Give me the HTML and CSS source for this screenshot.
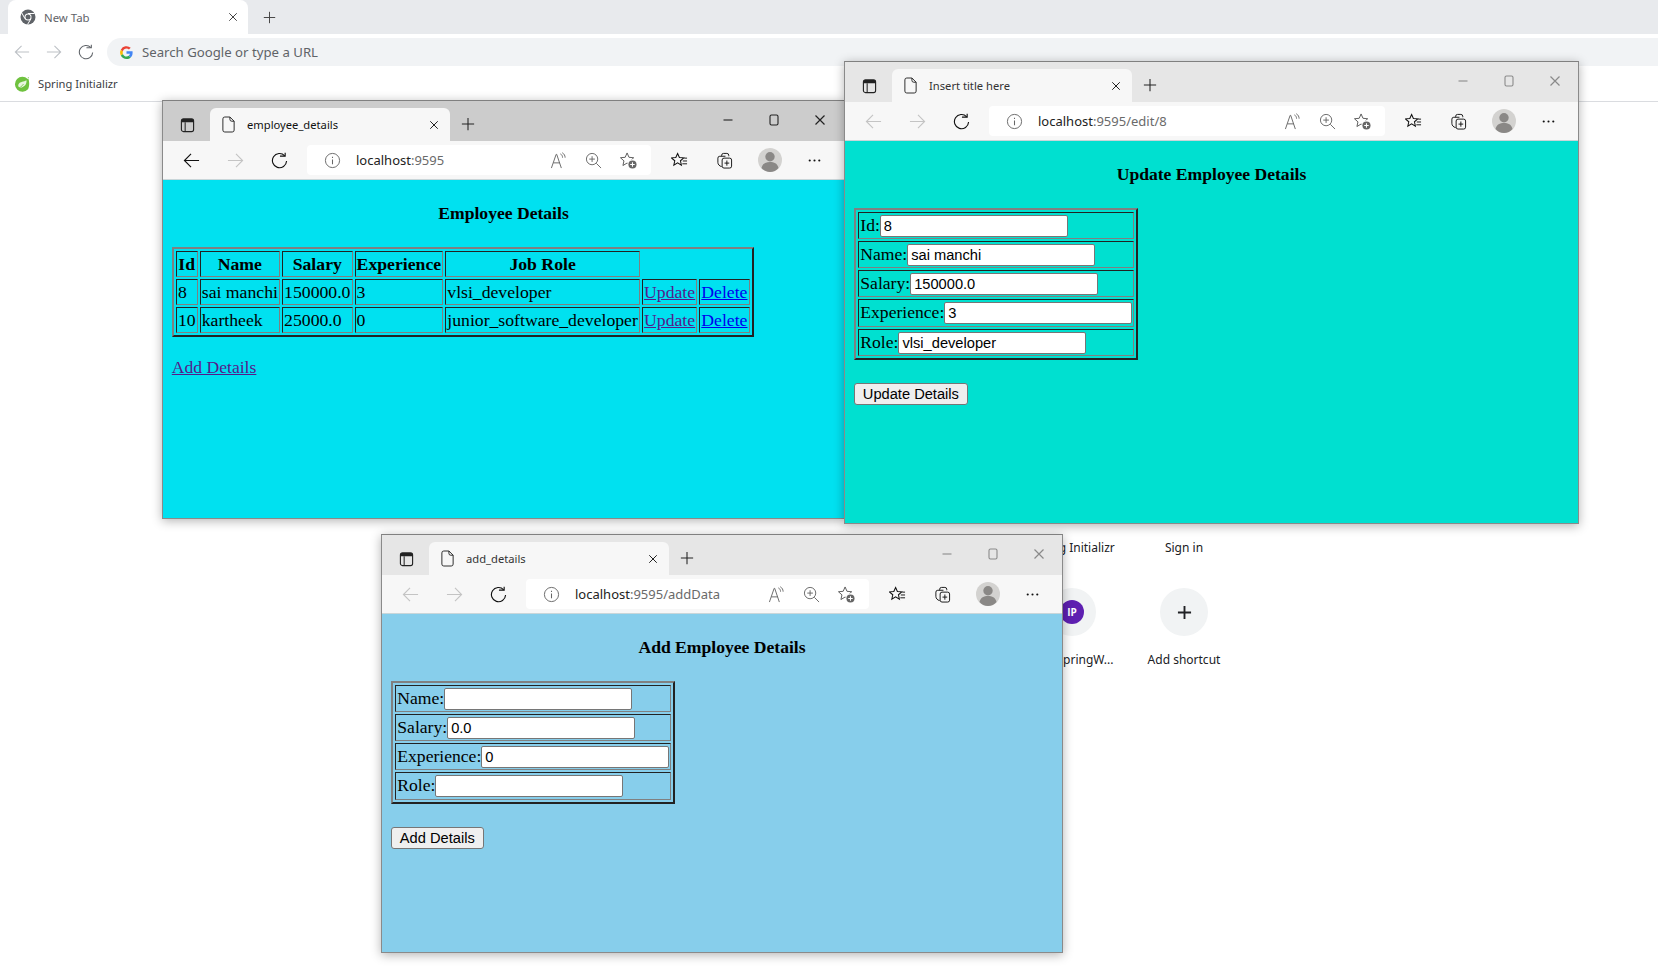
FILE: index.html
```html
<!DOCTYPE html>
<html lang="en">
<head>
<meta charset="utf-8">
<title>Employee windows</title>
<link rel="stylesheet" href="styles.css">
</head>
<body>
<svg class="defs" width="0" height="0" aria-hidden="true">
  <symbol id="i-vtabs" viewBox="0 0 16 16"><rect x="1.5" y="1.500" width="13" height="13.500" rx="2.200" fill="none" stroke="currentColor" stroke-width="1.2"/><path d="M1.5 3.500a2 2 0 0 1 2-2h9a2 2 0 0 1 2 2v1.500h-13z" fill="currentColor"/><path d="M5.500 5v10" stroke="currentColor" stroke-width="1.1"/></symbol>
  <symbol id="i-page" viewBox="0 0 16 18"><path d="M4 1h5.500L14 5.500V15a2 2 0 0 1-2 2H4a2 2 0 0 1-2-2V3a2 2 0 0 1 2-2z M9.500 1v2.500a2 2 0 0 0 2 2H14" fill="none" stroke="currentColor" stroke-width="1"/></symbol>
  <symbol id="i-x" viewBox="0 0 12 12"><path d="M1.5 1.5l9 9M10.5 1.5l-9 9" stroke="currentColor" stroke-width="1.2" fill="none"/></symbol>
  <symbol id="i-plus" viewBox="0 0 16 16"><path d="M8 1v14M1 8h14" stroke="currentColor" stroke-width="1.2" fill="none"/></symbol>
  <symbol id="i-plus-bold" viewBox="0 0 16 16"><path d="M8 1v14M1 8h14" stroke="currentColor" stroke-width="2" fill="none"/></symbol>
  <symbol id="i-min" viewBox="0 0 12 12"><path d="M1.500 6h9" stroke="currentColor" stroke-width="1.1"/></symbol>
  <symbol id="i-max" viewBox="0 0 12 12"><rect x="2" y="1" width="8" height="10" rx="1.5" fill="none" stroke="currentColor" stroke-width="1.1"/></symbol>
  <symbol id="i-back" viewBox="0 0 18 18"><path d="M17 9H1.5M8.5 2L1.5 9l7 7" fill="none" stroke="currentColor" stroke-width="1.2"/></symbol>
  <symbol id="i-fwd" viewBox="0 0 18 18"><path d="M1 9h15.5M9.5 2l7 7-7 7" fill="none" stroke="currentColor" stroke-width="1.2"/></symbol>
  <symbol id="i-reload" viewBox="0 0 18 18"><path d="M14.500 4A7.500 7.500 0 1 0 16.500 9.500" fill="none" stroke="currentColor" stroke-width="1.2"/><path d="M9.500 4.300h5.500V.8" fill="none" stroke="currentColor" stroke-width="1.2"/></symbol>
  <symbol id="i-info" viewBox="0 0 18 18"><circle cx="9" cy="9" r="7.5" fill="none" stroke="currentColor" stroke-width="1"/><path d="M9 8v5M9 5v1.3" stroke="currentColor" stroke-width="1.1"/></symbol>
  <symbol id="i-read" viewBox="0 0 18 18"><path d="M1.500 17L6.500 2.500h.6L12 17M3.500 11.500h7" fill="none" stroke="currentColor" stroke-width="1"/><path d="M11 2c1.500.8 2.300 2.200 2.300 4M13 .8c2 1.200 3 3 3 5.200" fill="none" stroke="currentColor" stroke-width="1"/></symbol>
  <symbol id="i-zoom" viewBox="0 0 18 18"><circle cx="7.5" cy="7.5" r="6" fill="none" stroke="currentColor" stroke-width="1"/><path d="M12 12l5 5M7.5 4.5v6M4.5 7.5h6" stroke="currentColor" stroke-width="1"/></symbol>
  <symbol id="i-favadd" viewBox="0 0 18 18"><path d="M7.500 1l2 4.600 5 .5-3.700 3.300 1.100 4.900-4.400-2.600-4.400 2.600 1.100-4.900L.5 6.100l5-.5z" fill="none" stroke="#555" stroke-width="1"/><circle cx="13.200" cy="13.200" r="5.400" fill="#fff"/><circle cx="13.200" cy="13.200" r="4.300" fill="#666"/><path d="M13.200 10.800v4.800M10.800 13.200h4.800" stroke="#fff" stroke-width="1.100"/></symbol>
  <symbol id="i-favs" viewBox="0 0 18 18"><path d="M7 1.500l1.900 4.300 4.600.4-3.500 3.100 1 4.600-4-2.400-4 2.400 1-4.600L.5 6.200l4.600-.4z" fill="none" stroke="currentColor" stroke-width="1.100"/><path d="M12.500 9.500h4.500M12 12.500h5M14 6.500h3" stroke="currentColor" stroke-width="1"/></symbol>
  <symbol id="i-coll" viewBox="0 0 18 18"><path d="M6 4.500V3.500a2 2 0 0 1 2-2h3.500a2 2 0 0 1 2 2v1" fill="none" stroke="currentColor" stroke-width="1"/><path d="M6 15.500C3.500 15 2 13 2 11V6.500a2 2 0 0 1 2-2h6" fill="none" stroke="currentColor" stroke-width="1"/><rect x="6.500" y="6.500" width="10" height="10.500" rx="2" fill="none" stroke="currentColor" stroke-width="1"/><path d="M11.500 9v5.500M9 11.750h5" stroke="currentColor" stroke-width="1"/></symbol>
  <symbol id="i-avatar" viewBox="0 0 24 24"><circle cx="12" cy="12" r="12" fill="#d3d2d0"/><circle cx="12" cy="8.700" r="4.700" fill="#8a8886"/><path d="M3.500 20c1-4.500 4.500-6 8.500-6s7.500 1.500 8.500 6c-2.200 2.500-5.200 4-8.500 4s-6.300-1.500-8.500-4z" fill="#8a8886"/></symbol>
  <symbol id="i-dots" viewBox="0 0 16 16"><circle cx="3.500" cy="8" r="1" fill="currentColor"/><circle cx="8" cy="8" r="1" fill="currentColor"/><circle cx="12.500" cy="8" r="1" fill="currentColor"/></symbol>
</svg>

<div class="chrome">
  <div class="tabstrip">
    <div class="ctab">
      <svg class="cfav" viewBox="0 0 16 16"><circle cx="8" cy="8" r="7.500" fill="#5f6368"/><circle cx="8" cy="8" r="3.500" fill="#fff"/><circle cx="8" cy="8" r="2.500" fill="#5f6368"/><path d="M8 4.500h6.500M5 9.700L1.800 4M11 9.700L7.500 15.500" stroke="#fff" stroke-width="1"/></svg>
      <span class="ctab-title">New Tab</span>
      <svg class="cx"><use href="#i-x"/></svg>
    </div>
    <svg class="cplus"><use href="#i-plus"/></svg>
  </div>
  <div class="ctoolbar">
    <svg class="cnav dim"><use href="#i-back"/></svg>
    <svg class="cnav dim"><use href="#i-fwd"/></svg>
    <svg class="cnav"><use href="#i-reload"/></svg>
    <div class="omnibox">
      <svg class="glogo" viewBox="0 0 16 16"><path d="M15.500 8.200c0-.6 0-1.100-.1-1.600H8v3h4.300c-.2 1-.8 1.800-1.600 2.400l2.500 2c1.500-1.400 2.300-3.400 2.300-5.800z" fill="#4285f4"/><path d="M8 16c2.100 0 3.900-.7 5.200-1.900l-2.500-2c-.7.500-1.600.8-2.700.8-2.100 0-3.800-1.400-4.400-3.200L1 11.700C2.300 14.300 5 16 8 16z" fill="#34a853"/><path d="M3.600 9.700a4.800 4.800 0 0 1 0-3.100L1 4.500a8 8 0 0 0 0 7.200z" fill="#fbbc05"/><path d="M8 3.200c1.200 0 2.200.4 3 1.200l2.200-2.200A8 8 0 0 0 1 4.500l2.600 2C4.200 4.600 5.900 3.200 8 3.200z" fill="#ea4335"/></svg>
      <span class="omni-text">Search Google or type a URL</span>
    </div>
  </div>
  <div class="bookmarks">
    <svg class="spring" viewBox="0 0 16 16"><path d="M14.800 1c-.2.800-.6 1.400-1.100 1.900A7.500 7.500 0 1 0 14 13.300c1.500-3 1.800-8-.3-12.300z" fill="#6fc23f"/><path d="M12.500 4.300c.3 3.800-1.800 6.900-6.200 7.500-1.600-.3-2.600-1.900-1.800-3.600C6.200 5.300 9.800 6.300 12.500 4.300z" fill="#e8f5df"/><path d="M3 12.500c2.500-.5 5-2 6.500-4.500" fill="none" stroke="#6fc23f" stroke-width=".8"/></svg>
    <span class="bm-text">Spring Initializr</span>
  </div>
  <div class="tiles">
    <div class="tile"><div class="tile-circle"></div><span class="tile-label">Spring Initializr</span></div>
    <div class="tile"><div class="tile-circle"></div><span class="tile-label">Sign in</span></div>
    <div class="tile"><div class="tile-circle"><span class="ip">IP</span></div><span class="tile-label">Java SpringW...</span></div>
    <div class="tile"><div class="tile-circle"><svg class="add"><use href="#i-plus-bold"/></svg></div><span class="tile-label">Add shortcut</span></div>
  </div>
</div>

<section class="win win-list active">
  <header class="titlebar">
    <svg class="tb-vtabs"><use href="#i-vtabs"/></svg>
    <div class="tab"><svg class="tab-page"><use href="#i-page"/></svg><span class="tab-title">employee_details</span><svg class="tab-x"><use href="#i-x"/></svg></div>
    <svg class="tb-plus"><use href="#i-plus"/></svg>
    <div class="controls"><svg class="ctl"><use href="#i-min"/></svg><svg class="ctl"><use href="#i-max"/></svg><svg class="ctl"><use href="#i-x"/></svg></div>
  </header>
  <nav class="toolbar">
    <span class="slot"><svg class="nav"><use href="#i-back"/></svg></span>
    <span class="slot dim"><svg class="nav"><use href="#i-fwd"/></svg></span>
    <span class="slot"><svg class="nav"><use href="#i-reload"/></svg></span>
    <div class="address">
      <svg class="a-info"><use href="#i-info"/></svg>
      <span class="url"><span class="host">localhost</span>:9595</span>
      <svg class="a-icon"><use href="#i-read"/></svg><svg class="a-icon"><use href="#i-zoom"/></svg><svg class="a-icon"><use href="#i-favadd"/></svg>
    </div>
    <span class="slot wide"><svg class="nav"><use href="#i-favs"/></svg></span>
    <span class="slot wide"><svg class="nav"><use href="#i-coll"/></svg></span>
    <span class="slot wide"><svg class="avatar"><use href="#i-avatar"/></svg></span>
    <span class="slot wide"><svg class="nav"><use href="#i-dots"/></svg></span>
  </nav>
  <main class="page page-list">
    <h4 class="heading">Employee Details</h4>
    <table class="data">
      <thead><tr><th>Id</th><th>Name</th><th>Salary</th><th>Experience</th><th>Job Role</th></tr></thead>
      <tbody>
        <tr><td>8</td><td>sai manchi</td><td>150000.0</td><td>3</td><td>vlsi_developer</td><td><a class="visited" href="#">Update</a></td><td><a class="fresh" href="#">Delete</a></td></tr>
        <tr><td>10</td><td>kartheek</td><td>25000.0</td><td>0</td><td>junior_software_developer</td><td><a class="visited" href="#">Update</a></td><td><a class="fresh" href="#">Delete</a></td></tr>
      </tbody>
    </table>
    <p class="after"><a class="visited" href="#">Add Details</a></p>
  </main>
</section>

<section class="win win-edit">
  <header class="titlebar">
    <svg class="tb-vtabs"><use href="#i-vtabs"/></svg>
    <div class="tab"><svg class="tab-page"><use href="#i-page"/></svg><span class="tab-title">Insert title here</span><svg class="tab-x"><use href="#i-x"/></svg></div>
    <svg class="tb-plus"><use href="#i-plus"/></svg>
    <div class="controls"><svg class="ctl"><use href="#i-min"/></svg><svg class="ctl"><use href="#i-max"/></svg><svg class="ctl"><use href="#i-x"/></svg></div>
  </header>
  <nav class="toolbar">
    <span class="slot dim"><svg class="nav"><use href="#i-back"/></svg></span>
    <span class="slot dim"><svg class="nav"><use href="#i-fwd"/></svg></span>
    <span class="slot"><svg class="nav"><use href="#i-reload"/></svg></span>
    <div class="address">
      <svg class="a-info"><use href="#i-info"/></svg>
      <span class="url"><span class="host">localhost</span>:9595/edit/8</span>
      <svg class="a-icon"><use href="#i-read"/></svg><svg class="a-icon"><use href="#i-zoom"/></svg><svg class="a-icon"><use href="#i-favadd"/></svg>
    </div>
    <span class="slot wide"><svg class="nav"><use href="#i-favs"/></svg></span>
    <span class="slot wide"><svg class="nav"><use href="#i-coll"/></svg></span>
    <span class="slot wide"><svg class="avatar"><use href="#i-avatar"/></svg></span>
    <span class="slot wide"><svg class="nav"><use href="#i-dots"/></svg></span>
  </nav>
  <main class="page page-edit">
    <h4 class="heading">Update Employee Details</h4>
    <table class="form">
      <tr><td><label class="field">Id:<input class="input" value="8"></label></td></tr>
      <tr><td><label class="field">Name:<input class="input" value="sai manchi"></label></td></tr>
      <tr><td><label class="field">Salary:<input class="input" value="150000.0"></label></td></tr>
      <tr><td><label class="field">Experience:<input class="input" value="3"></label></td></tr>
      <tr><td><label class="field">Role:<input class="input" value="vlsi_developer"></label></td></tr>
    </table>
    <button class="btn" type="button">Update Details</button>
  </main>
</section>

<section class="win win-add">
  <header class="titlebar">
    <svg class="tb-vtabs"><use href="#i-vtabs"/></svg>
    <div class="tab"><svg class="tab-page"><use href="#i-page"/></svg><span class="tab-title">add_details</span><svg class="tab-x"><use href="#i-x"/></svg></div>
    <svg class="tb-plus"><use href="#i-plus"/></svg>
    <div class="controls"><svg class="ctl"><use href="#i-min"/></svg><svg class="ctl"><use href="#i-max"/></svg><svg class="ctl"><use href="#i-x"/></svg></div>
  </header>
  <nav class="toolbar">
    <span class="slot dim"><svg class="nav"><use href="#i-back"/></svg></span>
    <span class="slot dim"><svg class="nav"><use href="#i-fwd"/></svg></span>
    <span class="slot"><svg class="nav"><use href="#i-reload"/></svg></span>
    <div class="address">
      <svg class="a-info"><use href="#i-info"/></svg>
      <span class="url"><span class="host">localhost</span>:9595/addData</span>
      <svg class="a-icon"><use href="#i-read"/></svg><svg class="a-icon"><use href="#i-zoom"/></svg><svg class="a-icon"><use href="#i-favadd"/></svg>
    </div>
    <span class="slot wide"><svg class="nav"><use href="#i-favs"/></svg></span>
    <span class="slot wide"><svg class="nav"><use href="#i-coll"/></svg></span>
    <span class="slot wide"><svg class="avatar"><use href="#i-avatar"/></svg></span>
    <span class="slot wide"><svg class="nav"><use href="#i-dots"/></svg></span>
  </nav>
  <main class="page page-add">
    <h4 class="heading">Add Employee Details</h4>
    <table class="form">
      <tr><td><label class="field">Name:<input class="input" value=""></label></td></tr>
      <tr><td><label class="field">Salary:<input class="input" value="0.0"></label></td></tr>
      <tr><td><label class="field">Experience:<input class="input" value="0"></label></td></tr>
      <tr><td><label class="field">Role:<input class="input" value=""></label></td></tr>
    </table>
    <button class="btn" type="button">Add Details</button>
  </main>
</section>
</body>
</html>
```
FILE: styles.css
```css
* { box-sizing: border-box; }
html, body { margin: 0; height: 100%; overflow: hidden; background: #fff; }
body { position: relative; font-family: "Noto Sans", "Open Sans", sans-serif; color: #202124; }
.defs { position: absolute; }
svg { display: block; flex: none; }

/* Background Chrome window */
.chrome { height: 966px; display: flex; flex-direction: column; }
.tabstrip { height: 34px; background: #e8eaed; display: flex; align-items: center; padding-left: 8px; }
.ctab { width: 240px; height: 34px; background: #fff; border-radius: 8px 8px 0 0; display: flex; align-items: center; padding: 0 10px 0 12px; }
.cfav { width: 16px; height: 16px; margin-right: 8px; }
.ctab-title { flex: 1; font-size: 11.400px; color: #5f6368; }
.cx { width: 10px; height: 10px; color: #444; }
.cplus { width: 13px; height: 13px; margin-left: 15px; color: #444; }
.ctoolbar { height: 36px; padding-left: 14px; display: flex; align-items: center; background: #fff; }
.cnav { width: 16px; height: 16px; margin-right: 16px; color: #5f6368; }
.cnav.dim { color: #bdc1c6; }
.omnibox { flex: 1; height: 28px; margin-left: -3px; background: #f1f3f5; border-radius: 14px 0 0 14px; display: flex; align-items: center; padding-left: 13px; }
.glogo { width: 13px; height: 13px; margin-right: 9px; }
.omni-text { font-size: 13.200px; color: #5f6368; }
.bookmarks { height: 32px; padding: 0 0 4px 14px; display: flex; align-items: center; border-bottom: 1px solid #dadce0; }
.spring { width: 16px; height: 16px; margin-right: 8px; }
.bm-text { font-size: 11.200px; color: #3c4043; }
.tiles { display: grid; grid-template-columns: repeat(2, 112px); grid-auto-rows: 112px; justify-content: end; padding: 362px 418px 0 0; }
.tile { display: flex; flex-direction: column; align-items: center; padding-top: 12px; }
.tile-circle { width: 48px; height: 48px; border-radius: 50%; background: #f1f3f4; display: flex; align-items: center; justify-content: center; }
.tile-label { margin-top: 16px; font-size: 12px; line-height: 16px; color: #202124; white-space: nowrap; }
.ip { width: 24px; height: 24px; border-radius: 50%; background: #5e1fb1; color: #fff; font-family: "Open Sans", sans-serif; font-size: 10px; font-weight: 700; display: flex; align-items: center; justify-content: center; }
.add { width: 15px; height: 15px; color: #202124; }

/* Floating Edge windows */
.win { position: absolute; display: flex; flex-direction: column; border: 1px solid #8a8a8a; border-top-color: #808080; box-shadow: 0 2px 10px rgba(0, 0, 0, .3); background: #fff; }
.win-list { left: 162px; top: 100px; width: 683px; height: 419px; }
.win-edit { left: 844px; top: 61px; width: 735px; height: 463px; }
.win-add { left: 381px; top: 534px; width: 682px; height: 419px; }

.titlebar { height: 40px; flex: none; background: #e6e6e6; display: flex; align-items: flex-end; padding-left: 17px; position: relative; }
.active .titlebar { background: #cccccc; }
.tb-vtabs { width: 15px; height: 16px; margin-bottom: 8px; color: #222; }
.tab { width: 240px; height: 33px; margin-left: 15px; background: #f7f7f7; border-radius: 6px 6px 0 0; display: flex; align-items: center; padding: 0 11px 0 11px; }
.tab-page { width: 15px; height: 17px; color: #222; margin-right: 11px; }
.tab-title { flex: 1; font-size: 11.200px; color: #333; white-space: nowrap; }
.active .tab-title { color: #111; }
.tab-x { width: 10px; height: 10px; color: #222; }
.tb-plus { width: 14px; height: 14px; margin: 0 0 10px 11px; color: #222; }
.controls { margin-left: auto; align-self: flex-start; display: flex; gap: 34px; padding: 13px 17px 0 0; color: #8a8a8a; }
.active .controls { color: #222; padding-right: 18px; }
.ctl { width: 12px; height: 12px; }

.toolbar { height: 39px; flex: none; background: #f7f7f7; border-bottom: 1px solid #c9d6d9; display: flex; align-items: center; padding: 0 7px 0 6px; }
.slot { width: 44px; height: 30px; display: flex; align-items: center; justify-content: center; color: #111; flex: none; }
.slot.wide { width: 45px; }
.slot.dim { color: #c4c4c4; }
.nav { width: 17px; height: 17px; }
.avatar { width: 24px; height: 24px; }
.address { flex: 1; height: 30px; margin: 0 6px 0 6px; padding: 0 14px 0 17px; background: #fff; border-radius: 4px; display: flex; align-items: center; color: #666; }
.a-info { width: 17px; height: 17px; margin-right: 15px; color: #666; }
.url { flex: 1; font-size: 13px; color: #6a6a6a; white-space: nowrap; }
.host { color: #222; }
.a-icon { width: 17px; height: 17px; margin-left: 18px; color: #666; }

.page { flex: 1; padding: 0 8.800px; font-family: "Liberation Serif", "Times New Roman", serif; font-size: 17.600px; color: #000; }
.page-list { background: #00e1f0; }
.page-edit { background: #00e0d0; }
.page-add { background: #87ceeb; }
.heading { margin: 23.400px 0; font-size: 17.600px; font-weight: 700; text-align: center; line-height: 20px; }

.data, .form { border-collapse: separate; border-spacing: 2.200px; border: 2px solid; border-color: #808080 #222 #222 #808080; }
.data td, .data th, .form td { border: 1px solid; border-color: #222 #808080 #808080 #222; padding: 1.100px; line-height: 22px; }
.data { font-size: 17.700px; }
.form td { padding: 1.100px 1px 1.100px 1.500px; }
.after { margin: 19.500px 0; line-height: 20px; }
.visited { color: #551a8b; }
.fresh { color: #0000ee; }

.field { display: block; white-space: nowrap; }
.input { width: 188px; height: 22px; padding: 1px 3px; vertical-align: baseline; border: 1px solid #767676; border-radius: 2px; background: #fff; font-family: "Liberation Sans", Arial, sans-serif; font-size: 14.670px; color: #000; }
.btn { display: block; margin-top: 23px; height: 22px; padding: 0 8px; border: 1px solid #767676; border-radius: 3px; background: #efefef; font-family: "Liberation Sans", Arial, sans-serif; font-size: 14.670px; color: #000; }
```
